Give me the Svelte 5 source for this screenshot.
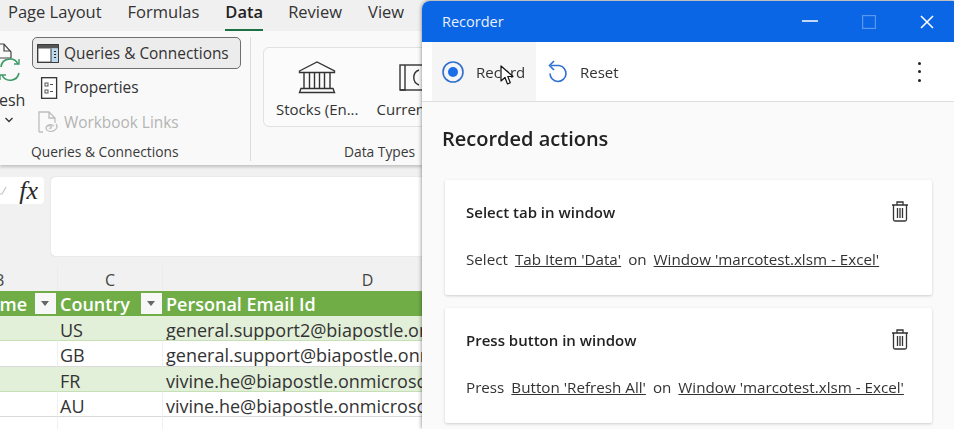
<script>
  const tabs = [
    { label: 'Page Layout' },
    { label: 'Formulas' },
    { label: 'Data', active: true },
    { label: 'Review' },
    { label: 'View' }
  ]

  const rows = [
    { code: 'US', email: 'general.support2@biapostle.onmicrosoft.com', band: true },
    { code: 'GB', email: 'general.support@biapostle.onmicrosoft.com', band: false },
    { code: 'FR', email: 'vivine.he@biapostle.onmicrosoft.com', band: true },
    { code: 'AU', email: 'vivine.he@biapostle.onmicrosoft.com', band: false }
  ]

  const actions = [
    { title: 'Select tab in window', verb: 'Select', target: "Tab Item 'Data'", win: "Window 'marcotest.xlsm - Excel'" },
    { title: 'Press button in window', verb: 'Press', target: "Button 'Refresh All'", win: "Window 'marcotest.xlsm - Excel'" }
  ]
</script>

<div class="screen">
  <section class="excel">
    <nav class="tabs">
      {#each tabs as t}
        <span class="tab" class:active={t.active}>{t.label}</span>
      {/each}
    </nav>

    <div class="ribbon">
      <div class="group queries">
        <div class="group-body">
          <div class="refresh">
            <svg width="26" height="46" viewBox="0 0 26 46" fill="none">
              <path d="M-1 1h6l7 8v6H-1M5 1v7h7" stroke="#444" stroke-width="1.200" />
              <path d="M2 24a9 9 0 0 1 17-3M20 30a9 9 0 0 1-17 2" stroke="#3f9a68" stroke-width="1.600" />
              <path d="M15 21h5v-5M7 32H1v5" stroke="#3f9a68" stroke-width="1.400" />
            </svg>
            <span class="refresh-label">esh</span>
            <svg class="chev" width="10" height="6" viewBox="0 0 10 6" fill="none"><path d="M1.500 1l3.500 3.500L8.500 1" stroke="#333" stroke-width="1.300" /></svg>
          </div>
          <div class="cmds">
            <div class="cmd selected">
              <svg width="22" height="19" viewBox="0 0 22 19" fill="none">
                <rect x=".7" y=".7" width="20.600" height="17.600" fill="#fff" stroke="#333" stroke-width="1.300" />
                <path d="M1 1h20v3.500H1z" fill="#555" />
                <path d="M14 4.500h7V18h-7z" fill="#bcd9ef" />
                <path d="M14 4.500V18" stroke="#333" />
                <path d="M17 7.500h2M17 10.500h2M17 13.500h2" stroke="#222" stroke-width="1.200" />
              </svg>
              <span>Queries &amp; Connections</span>
            </div>
            <div class="cmd">
              <svg width="22" height="22" viewBox="0 0 22 22" fill="none">
                <rect x="4.600" y=".7" width="15" height="20.600" fill="#fff" stroke="#333" stroke-width="1.300" />
                <rect x="8" y="6" width="3" height="3" stroke="#555" />
                <rect x="8" y="13" width="3" height="3" stroke="#555" />
                <path d="M13 7.500h3M13 14.500h3" stroke="#555" />
              </svg>
              <span>Properties</span>
            </div>
            <div class="cmd disabled">
              <svg width="22" height="23" viewBox="0 0 22 23" fill="none" stroke="#bdbdbd" stroke-width="1.300">
                <path d="M2 21V1h10l6 6v5M12 1v6h6M2 21h4" />
                <path d="M9 16c2-3 6-3 8-1M19 13c2 2 1 6-3 7-3 1-7 0-7-3 0-2 3-3 5-2 1 1 0 3-2 2" />
              </svg>
              <span>Workbook Links</span>
            </div>
          </div>
        </div>
        <div class="group-label">Queries &amp; Connections</div>
      </div>

      <div class="group types">
        <div class="gallery">
          <div class="gallery-item">
            <svg width="38" height="33" viewBox="0 0 38 33" fill="none" stroke="#333" stroke-width="1.400">
              <path d="M1.500 10L19 1l17.500 9v1.500h-35z" />
              <path d="M6 11.500v16M11.500 11.500v16M16.500 11.500v16M21.500 11.500v16M26.500 11.500v16M32 11.500v16" />
              <path d="M3 27.500h32l1.500 4H1.500z" />
            </svg>
            <span>Stocks (En...</span>
          </div>
          <div class="gallery-item">
            <svg width="38" height="33" viewBox="0 0 38 33" fill="none" stroke="#333" stroke-width="1.400">
              <rect x="5" y="4" width="32" height="25" />
              <path d="M10 4v25H5M24 9a8 8 0 0 0 0 15" />
            </svg>
            <span>Currencies</span>
          </div>
        </div>
        <div class="group-label">Data Types</div>
      </div>
    </div>

    <div class="formula">
      <div class="fx">
        <svg width="8" height="10" viewBox="0 0 8 10" fill="none"><path d="M-1 8l3 0 4-7" stroke="#c4c4c4" stroke-width="1.200" /></svg>
        <i>fx</i>
      </div>
      <div class="input"></div>
    </div>

    <div class="sheet">
      <div class="col-head">B</div>
      <div class="col-head">C</div>
      <div class="col-head">D</div>

      <div class="th name">me<span class="filter"></span></div>
      <div class="th country">Country<span class="filter"></span></div>
      <div class="th">Personal Email Id</div>

      {#each rows as r}
        <div class="td" class:band={r.band}></div>
        <div class="td code" class:band={r.band}>{r.code}</div>
        <div class="td" class:band={r.band}>{r.email}</div>
      {/each}

      <div class="td blank"></div>
      <div class="td blank"></div>
      <div class="td blank"></div>
    </div>
  </section>

  <section class="recorder">
    <header class="titlebar">
      <span class="title">Recorder</span>
      <div class="win-btns">
        <svg width="16" height="16" viewBox="0 0 16 16"><path d="M0 7h16" stroke="#fff" stroke-width="1.600" /></svg>
        <svg width="14" height="14" viewBox="0 0 14 14" fill="none"><rect x=".6" y=".6" width="12.800" height="12.800" stroke="#5b97ee" stroke-width="1.200" /></svg>
        <svg width="14" height="14" viewBox="0 0 14 14"><path d="M1 1l12 12M13 1L1 13" stroke="#fff" stroke-width="1.600" /></svg>
      </div>
    </header>

    <div class="toolbar">
      <div class="tool hover">
        <svg width="22" height="22" viewBox="0 0 22 22" fill="none">
          <circle cx="11" cy="11" r="10" stroke="#2f6fd0" stroke-width="1.600" />
          <circle cx="11" cy="11" r="5" fill="#1a6fe8" />
        </svg>
        <span>Record</span>
      </div>
      <div class="tool reset">
        <svg width="21" height="23" viewBox="0 0 21 23" fill="none" stroke="#2f6fd0" stroke-width="1.600">
          <path d="M4 5.500h8a8 8 0 1 1-9 8" />
          <path d="M7 1L2.500 5.500 7 10" />
        </svg>
        <span>Reset</span>
      </div>
      <div class="more"><i></i><i></i><i></i></div>
      <svg class="cursor" width="14" height="21" viewBox="0 0 14 21">
        <path d="M1 1v15l4-3.500 2.500 6.500 2.800-1.200L7.800 11.500H13z" fill="#fff" stroke="#111" stroke-width="1.200" stroke-linejoin="round" />
      </svg>
    </div>

    <div class="content">
      <h2>Recorded actions</h2>
      {#each actions as a}
        <article class="card">
          <div class="card-head">
            <h3>{a.title}</h3>
            <svg width="16" height="21" viewBox="0 0 16 21" fill="none" stroke="#333" stroke-width="1.300">
              <path d="M0 4h16M5 3.500V1h6v2.500" />
              <path d="M1.500 4v14.500A1.500 1.500 0 0 0 3 20h10a1.500 1.500 0 0 0 1.500-1.500V4" />
              <path d="M5.500 7v10M8 7v10M10.500 7v10" />
            </svg>
          </div>
          <p>{a.verb}<u>{a.target}</u>on<u>{a.win}</u></p>
        </article>
      {/each}
    </div>
  </section>
</div>

<style>
  :global(body) {
    margin: 0;
    overflow: hidden;
    background: #f0f0f0;
  }
  .screen {
    display: flex;
    width: 954px;
    height: 429px;
    overflow: hidden;
    font-family: 'Open Sans', 'Noto Sans', sans-serif;
    color: #2a2a2a;
    filter: blur(0.3px);
  }

  /* excel side */
  .excel {
    width: 422px;
    flex: none;
    overflow: hidden;
    background: #f1f1f1;
  }
  .tabs {
    display: flex;
    gap: 26px;
    height: 31px;
    padding-left: 8px;
    box-sizing: border-box;
    background: #f0f0f0;
  }
  .tab {
    position: relative;
    font-size: 16.500px;
    line-height: 24px;
    padding-bottom: 1px;
    white-space: nowrap;
    color: #333;
  }
  .tab.active {
    font-weight: 600;
    color: #222;
    margin-right: -1px;
  }
  .tab.active::after {
    content: '';
    position: absolute;
    left: 0;
    right: 0;
    bottom: 0;
    height: 2px;
    background: #1e7145;
  }
  .ribbon {
    display: flex;
    height: 134px;
    background: #f9f9f9;
    box-shadow: 0 2px 3px rgba(0, 0, 0, 0.2);
    position: relative;
    overflow: hidden;
  }
  .group {
    position: relative;
    display: flex;
    flex-direction: column;
  }
  .group-label {
    font-size: 13.800px;
    line-height: 18px;
    color: #3a3a3a;
    white-space: nowrap;
  }
  .queries {
    width: 251px;
    flex: none;
    box-sizing: border-box;
    height: 124px;
    margin-top: 6px;
    border-right: 1px solid #dcdcdc;
  }
  .queries .group-label {
    margin: 0 0 0 31px;
  }
  .group-body {
    display: flex;
    flex: 1;
    margin-left: -1px;
  }
  .refresh {
    width: 33px;
    flex: none;
    display: flex;
    flex-direction: column;
    overflow: hidden;
    padding-top: 6px;
  }
  .refresh-label {
    font-size: 16px;
    line-height: 20px;
    margin: 1px 0 0 0;
    color: #333;
  }
  .chev {
    margin: 7px 0 0 5px;
  }
  .cmds {
    display: flex;
    flex-direction: column;
    width: 209px;
  }
  .cmd {
    display: flex;
    align-items: center;
    gap: 5px;
    height: 35px;
    padding-left: 5px;
    box-sizing: border-box;
    font-size: 15.400px;
    white-space: nowrap;
    color: #333;
  }
  .cmd.selected {
    height: 32px;
    margin-bottom: 1px;
    background: #ececec;
    border: 1px solid #6f6f6f;
    border-radius: 5px;
    padding-left: 4px;
  }
  .cmd.disabled {
    color: #b4b4b4;
  }
  .types {
    flex: 1;
    margin: 16px 0 0 12px;
    min-width: 0;
  }
  .gallery {
    display: flex;
    gap: 18px;
    height: 80px;
    width: 220px;
    padding-left: 12px;
    box-sizing: border-box;
    background: #fbfbfb;
    border: 1px solid #e1e1e1;
    border-radius: 6px;
  }
  .gallery-item {
    display: flex;
    flex-direction: column;
    align-items: center;
    padding-top: 13px;
    gap: 5px;
    font-size: 15px;
    white-space: nowrap;
    color: #333;
    line-height: 20px;
  }
  .types .group-label {
    margin: 16px 0 0 81px;
  }

  .formula {
    display: flex;
    gap: 7px;
    height: 101px;
    padding-top: 12px;
    box-sizing: border-box;
  }
  .fx {
    width: 44px;
    height: 27px;
    flex: none;
    display: flex;
    justify-content: space-between;
    align-items: center;
    padding-right: 6px;
    box-sizing: border-box;
    background: #fff;
    border-radius: 0 4px 4px 0;
    font-family: 'Liberation Serif', serif;
    font-size: 26px;
    line-height: 27px;
  }
  .input {
    flex: 1;
    height: 79px;
    background: #fff;
    border-radius: 4px 0 0 4px;
    box-shadow: 0 0 1px rgba(0, 0, 0, 0.3);
  }
  .sheet {
    display: grid;
    grid-template-columns: 58px 105px 410px;
    grid-template-rows: 25px 25px repeat(4, 25.300px) 25px;
    width: 422px;
    overflow: hidden;
  }
  .col-head {
    font-size: 16px;
    line-height: 29px;
    text-align: center;
    color: #444;
    border-right: 1px solid #ebebeb;
    box-sizing: border-box;
    overflow: hidden;
  }
  .col-head:first-child {
    text-align: left;
    text-indent: -6px;
  }
  .th {
    display: flex;
    align-items: center;
    justify-content: space-between;
    padding: 1px 0 0 3px;
    background: #70ad47;
    color: #fff;
    font-size: 18px;
    font-weight: 600;
    white-space: nowrap;
    overflow: hidden;
    box-sizing: border-box;
  }
  .th.name {
    justify-content: flex-end;
    gap: 8px;
    padding-right: 2px;
  }
  .th.country {
    padding: 1px 1px 0 2px;
  }
  .filter {
    position: relative;
    top: -1px;
    width: 21px;
    height: 21px;
    background: #f7f7f7;
    flex: none;
  }
  .filter::after {
    content: '';
    position: absolute;
    left: 6px;
    top: 8px;
    border-style: solid;
    border-width: 5px 4.500px 0;
    border-color: #666 transparent transparent;
  }
  .td {
    padding: 2px 0 0 3px;
    font-size: 18px;
    line-height: 25px;
    background: #fff;
    color: #333;
    white-space: nowrap;
    overflow: hidden;
    border-bottom: 1px solid #dadada;
    border-right: 1px solid #f0f0f0;
    box-sizing: border-box;
  }
  .td.code {
    padding-left: 2px;
  }
  .td.band {
    background: #e2efd9;
    border-right-color: #e2efd9;
    border-bottom-color: #c6dfb4;
  }
  .td.blank {
    border-bottom: 0;
  }

  /* recorder window */
  .recorder {
    flex: 1;
    position: relative;
    background: #fafafa;
    border-top-left-radius: 8px;
    overflow: hidden;
    margin-top: 1px;
    box-shadow: 0 0 4px rgba(0, 0, 0, 0.5);
  }
  .titlebar {
    display: flex;
    align-items: center;
    justify-content: space-between;
    height: 41px;
    padding: 0 20px;
    box-sizing: border-box;
    background: #0a66e4;
    color: #e9f1fd;
  }
  .title {
    font-size: 14.500px;
  }
  .win-btns {
    display: flex;
    align-items: center;
    gap: 44px;
  }
  .toolbar {
    position: relative;
    display: flex;
    height: 60px;
    padding-left: 10px;
    box-sizing: border-box;
    background: #fff;
    border-bottom: 1px solid #dedede;
  }
  .tool {
    display: flex;
    align-items: center;
    gap: 12px;
    height: 100%;
    padding: 0 10px;
    box-sizing: border-box;
    font-size: 15px;
    color: #333;
  }
  .tool.hover {
    width: 104px;
    background: #f5f5f5;
  }
  .tool.reset {
    padding-left: 11px;
  }
  .more {
    margin-left: auto;
    margin-right: 33px;
    display: flex;
    flex-direction: column;
    justify-content: center;
    gap: 5.500px;
  }
  .more i {
    display: block;
    width: 3px;
    height: 3px;
    border-radius: 50%;
    background: #222;
  }
  .cursor {
    position: absolute;
    left: 78px;
    top: 23px;
  }
  .content {
    padding: 22px 22px 0 23px;
  }
  h2 {
    margin: 0 0 26px -3px;
    font-size: 20px;
    font-weight: 600;
    line-height: 30px;
    color: #222;
  }
  .card {
    height: 115px;
    margin-bottom: 13px;
    padding: 0 24px 0 21px;
    box-sizing: border-box;
    background: #fff;
    box-shadow: 0 1px 3px rgba(0, 0, 0, 0.18);
    border-radius: 2px;
  }
  .card-head {
    display: flex;
    align-items: center;
    justify-content: space-between;
    height: 63px;
  }
  h3 {
    margin: 0;
    font-size: 15px;
    font-weight: 600;
    color: #222;
  }
  p {
    display: flex;
    gap: 7px;
    margin: 5px 0 0;
    font-size: 15.200px;
    line-height: 22px;
    white-space: nowrap;
    color: #333;
  }
</style>
